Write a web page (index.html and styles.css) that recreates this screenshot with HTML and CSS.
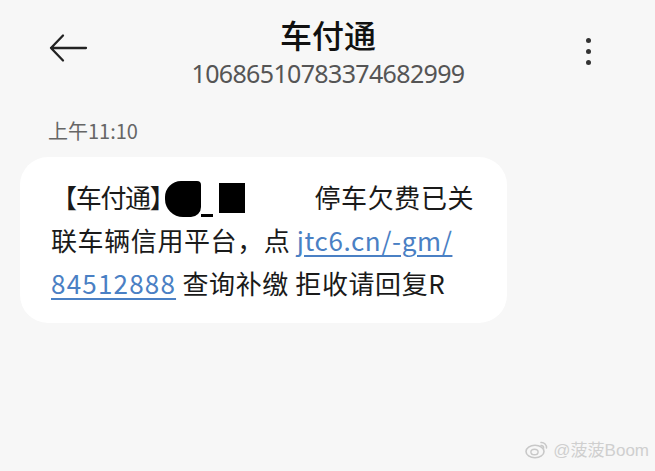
FILE: index.html
```html
<!DOCTYPE html>
<html>

<head>
    <meta charset="UTF-8">
    <title>车付通</title>
    <link rel="stylesheet" href="styles.css">
</head>

<body>
    <div class="page">
        <div class="top">
            <span class="back">
                <svg width="40" height="30" viewBox="0 0 40 30">
                    <path d="M38 15H3M15 2.5L3 15l12 12.5" fill="none" stroke="#222" stroke-width="2.3" stroke-linecap="round" stroke-linejoin="round"/>
                </svg>
            </span>
            <div class="title">
                <div class="name">车付通</div>
                <div class="phone">10686510783374682999</div>
            </div>
            <span class="more">
                <i></i><i></i><i></i>
            </span>
        </div>
        <div class="time">上午11:10</div>
        <div class="bubble">
            <p><span class="tag">【车付通】</span><span class="blot"></span><span class="line"></span><span class="box"></span><span class="gap"></span>停车欠费已关<br>联车辆信用平台，点 <a href="#">jtc6.cn/-gm/</a><br><a href="#" class="num">84512888</a> 查询补缴 拒收请回复R</p>
        </div>
        <div class="mark">
            <svg width="24" height="20" viewBox="0 0 24 20">
                <ellipse cx="10" cy="12.5" rx="9" ry="6.2" fill="none" stroke="#c8c8c8" stroke-width="1.6"/>
                <ellipse cx="9.5" cy="13" rx="3.6" ry="2.8" fill="none" stroke="#c8c8c8" stroke-width="1.4"/>
                <path d="M16 3.5a5 5 0 0 1 5.5 5.5M16 6.5a2.3 2.3 0 0 1 2.6 2.6" fill="none" stroke="#c8c8c8" stroke-width="1.5" stroke-linecap="round"/>
            </svg>
            <span>@菠菠Boom</span>
        </div>
    </div>
</body>
</html>
```

FILE: styles.css
```css
* {
    margin: 0;
    padding: 0;
}

body {
    background: #f7f7f7;
    font-family: "Noto Sans CJK SC", "Noto Sans", sans-serif;
    color: #1a1a1a;
}

.page {
    width: 655px;
    height: 471px;
    position: relative;
    overflow: hidden;
}

.top {
    display: flex;
    align-items: flex-start;
    padding: 14px 47px 0 48px;
}

.back {
    display: block;
    width: 40px;
    height: 30px;
    margin-top: 19px;
}

.title {
    flex: 1;
    text-align: center;
}

.name {
    font-size: 32px;
    font-weight: 500;
    line-height: 40px;
    color: #111;
}

.phone {
    margin-top: 4px;
    font-family: "Noto Sans", sans-serif;
    font-size: 25px;
    line-height: 30px;
    color: #555;
    letter-spacing: -0.65px;
}

.more {
    display: flex;
    flex-direction: column;
    align-items: center;
    gap: 6px;
    width: 40px;
    margin-top: 24px;
}

.more i {
    display: block;
    width: 5px;
    height: 5px;
    border-radius: 50%;
    background: #333;
}

.time {
    margin: 31px 0 0 48px;
    font-size: 20px;
    line-height: 24px;
    color: #666;
}

.bubble {
    margin: 14px 0 0 20px;
    width: 487px;
    height: 166px;
    box-sizing: border-box;
    background: #fff;
    border-radius: 28px;
    padding: 18px 0 0 31px;
}

.bubble p {
    font-size: 26px;
    line-height: 43px;
    letter-spacing: 0.6px;
    white-space: nowrap;
}

.tag {
    letter-spacing: -1.3px;
}

.bubble a {
    color: #4a80c4;
    text-decoration: underline;
    text-underline-offset: 4px;
    text-decoration-thickness: 1.5px;
    letter-spacing: 0.6px;
}

.bubble a.num {
    letter-spacing: 1.2px;
}

.blot {
    display: inline-block;
    width: 36px;
    height: 36px;
    margin-left: -10px;
    background: #000;
    border-radius: 16px 4px 10px 18px;
    vertical-align: -9px;
}

.line {
    display: inline-block;
    width: 12px;
    height: 3px;
    background: #000;
    vertical-align: -9px;
}

.box {
    display: inline-block;
    width: 26px;
    height: 30px;
    margin-left: 6px;
    background: #000;
    vertical-align: -5px;
}

.gap {
    display: inline-block;
    width: 70px;
}

.mark {
    position: absolute;
    right: 6px;
    bottom: 10px;
    display: flex;
    align-items: center;
    gap: 4px;
    color: #cfcfcf;
    font-size: 17px;
    font-family: "Liberation Sans", "Noto Sans CJK SC", sans-serif;
}
```
